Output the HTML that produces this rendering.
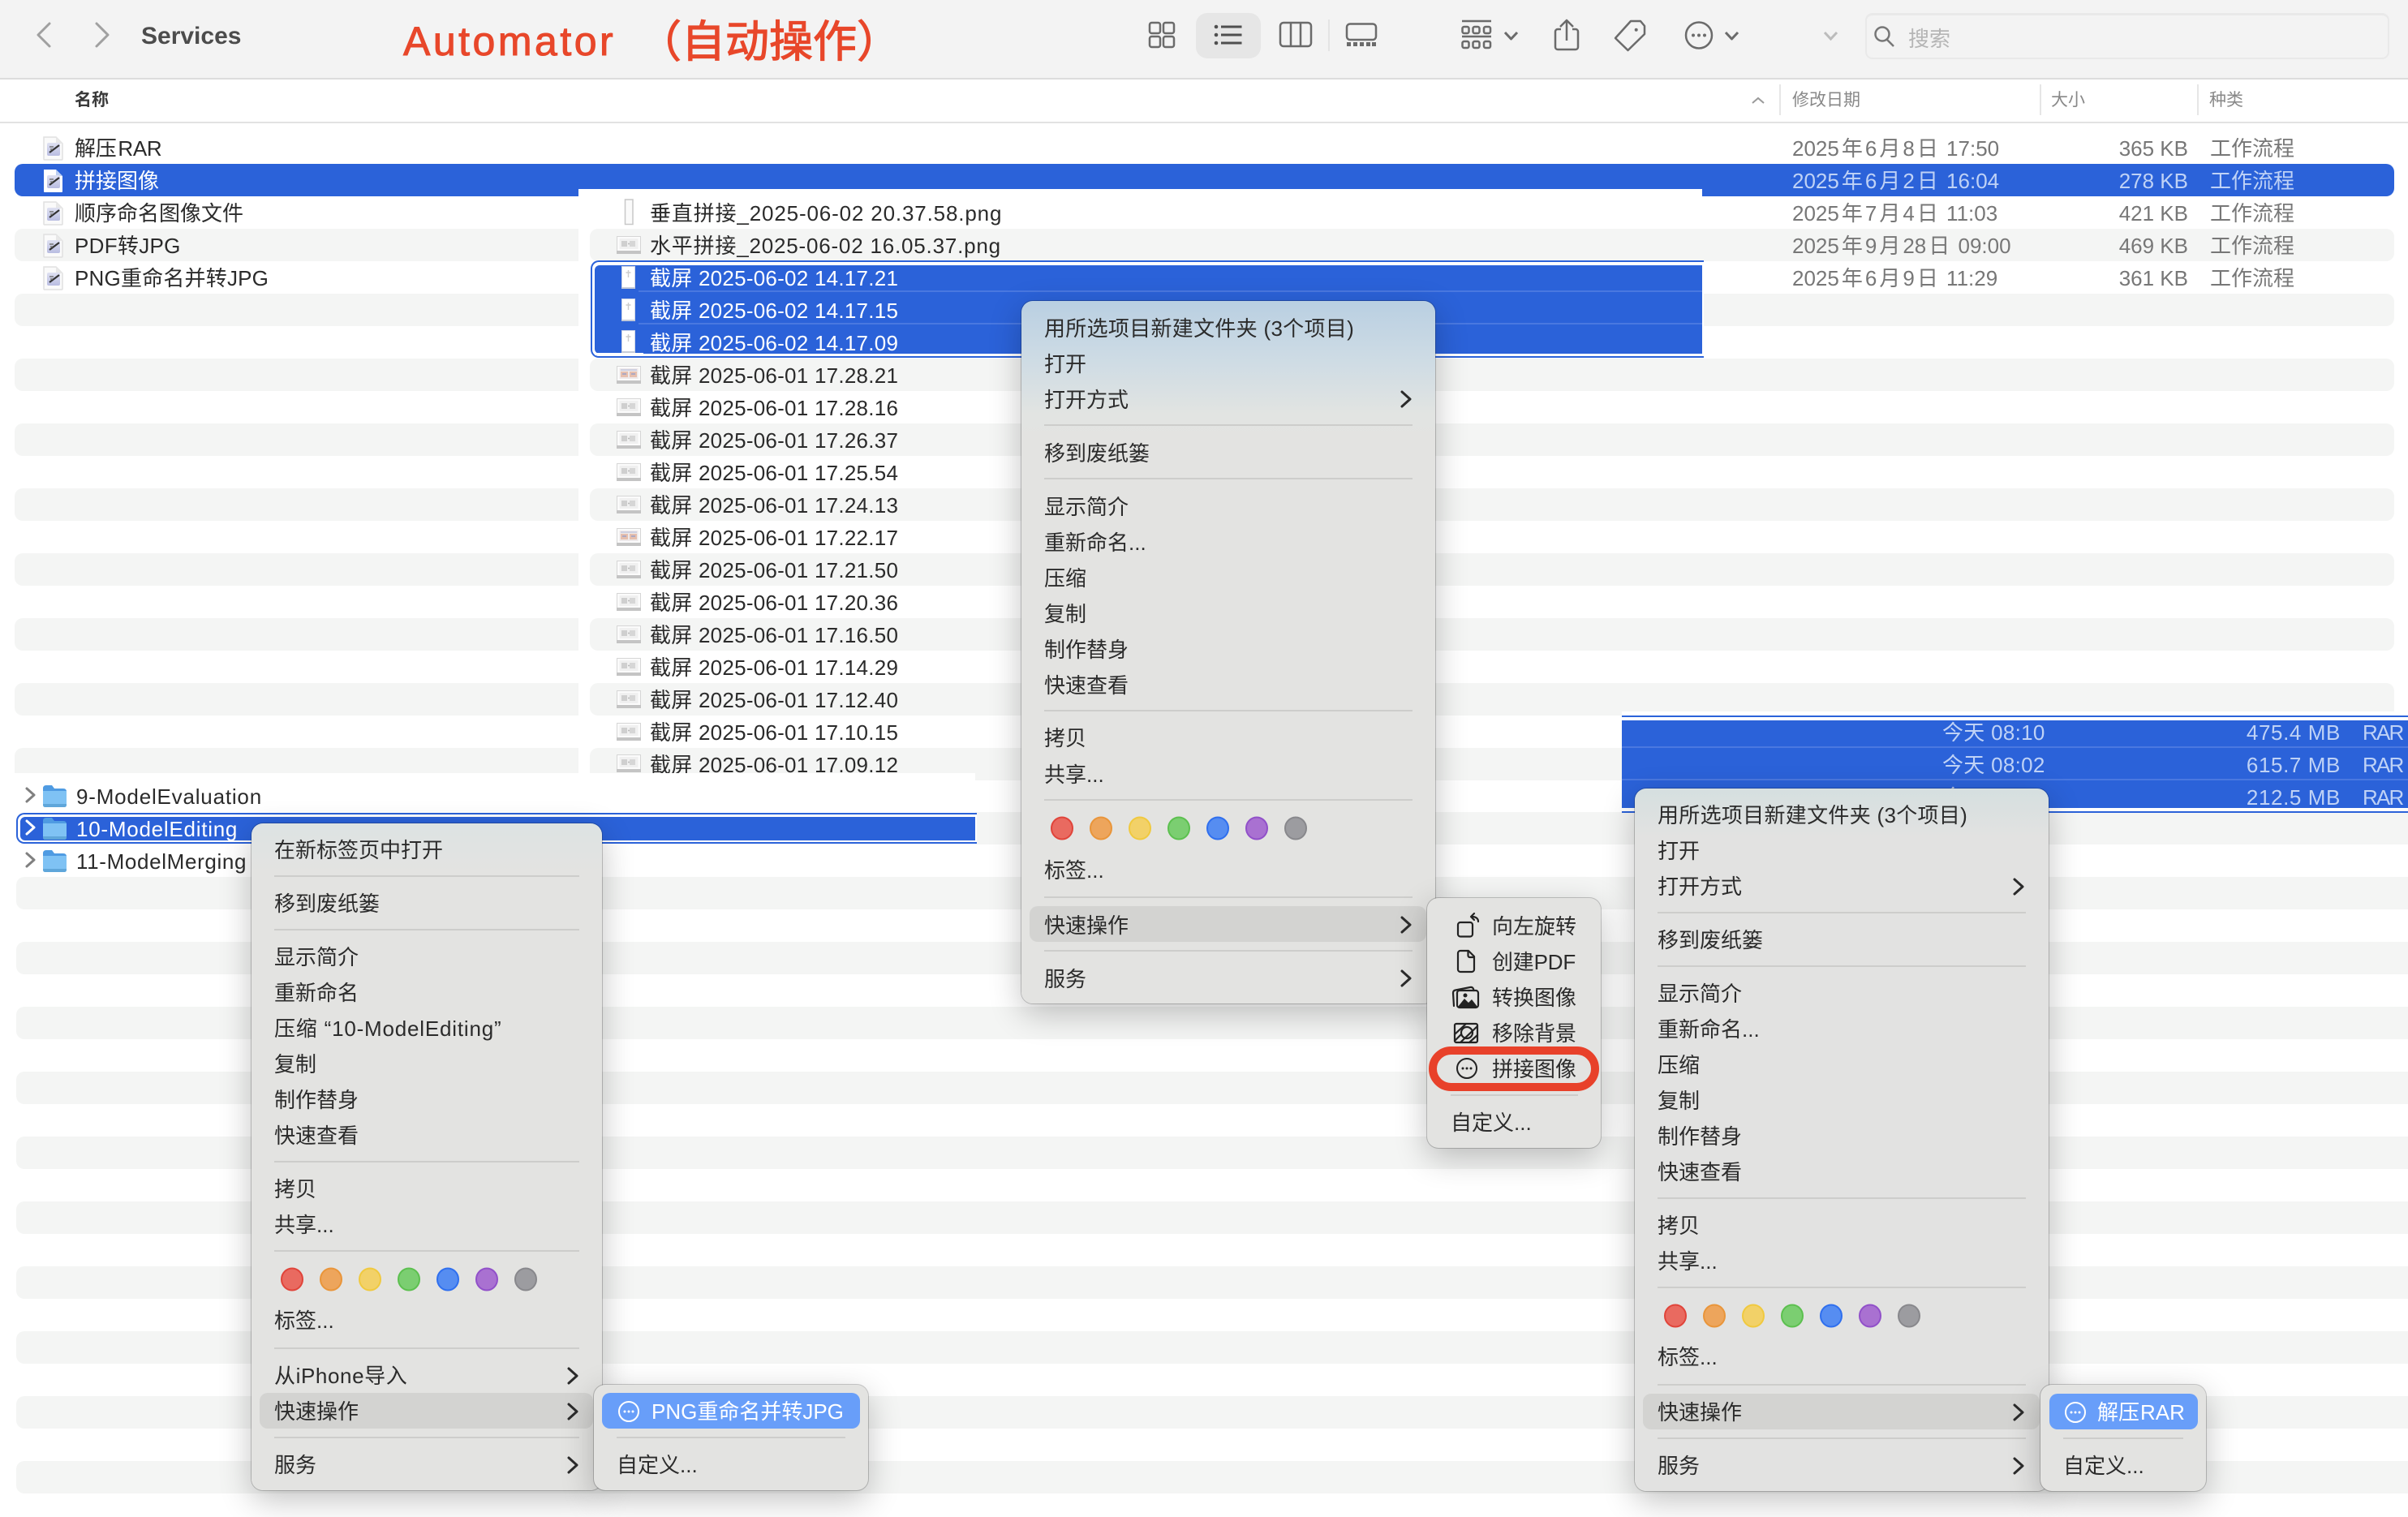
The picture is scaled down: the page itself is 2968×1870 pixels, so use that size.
<!DOCTYPE html>
<html lang="zh-CN"><head><meta charset="utf-8"><title>Automator</title>
<style>
html,body{margin:0;padding:0;background:#fff}
body{position:relative;width:2968px;height:1870px;overflow:hidden;font-family:"Liberation Sans","Noto Sans CJK SC",sans-serif;color:#2b2b2b}
div{position:absolute}
.t{position:absolute;white-space:nowrap;font-size:26px;line-height:40px;height:40px;margin-top:1px}
.t i{font-style:normal;margin:0 3px}
.w{color:#fff}
.g{color:#777}
.l{color:#bfd2f6}
.d{left:2209px}
.z{right:271px;text-align:right}
.k{left:2724px}
.hd{font-size:21px;color:#888}
.st{background:#f4f5f4;height:40px}
.m{border-radius:14px;background:#e3e3e1;box-shadow:0 0 0 1px rgba(0,0,0,.2),0 12px 40px rgba(0,0,0,.24)}
.s{height:2px;background:#cdcdcb}
.h{background:#d3d3d1;border-radius:10px;height:44px}
.b{background:#689ef9;border-radius:10px;height:44px}
.sl{background:#4a78e0;height:2px}
.f{left:801px;letter-spacing:.25px}
.r{letter-spacing:-1.8px}
</style></head><body>

<!-- toolbar -->
<div style="left:0;top:0;width:2968px;height:96px;background:#f3f3f3;border-bottom:2px solid #dcdcdc"></div>
<div style="left:1474px;top:16px;width:80px;height:56px;border-radius:14px;background:#e6e6e6"></div>
<div style="left:1637px;top:24px;width:2px;height:39px;background:#e4e4e4"></div>
<div style="left:2299px;top:16px;width:642px;height:52px;border:2px solid #e9e9e9;border-top-width:3px;border-radius:9px"></div>
<span class="t" style="left:174px;top:24px;font-size:30px;font-weight:bold;color:#4c4c4c">Services</span>
<span class="t" style="left:497px;top:20px;font-size:50px;line-height:60px;height:60px;letter-spacing:3.5px;color:#e8472a;-webkit-text-stroke:1px #e8472a">Automator</span>
<span class="t" style="left:786px;top:21px;font-size:54px;line-height:60px;height:60px;color:#e8472a;-webkit-text-stroke:1.2px #e8472a">（自动操作）</span>
<span class="t" style="left:2352px;top:27px;color:#b5b5b5">搜索</span>

<!-- column header -->
<div style="left:0;top:150px;width:2968px;height:2px;background:#e2e2e2"></div>
<div style="left:2193px;top:104px;width:2px;height:38px;background:#e6e6e6"></div>
<div style="left:2514px;top:104px;width:2px;height:38px;background:#e6e6e6"></div>
<div style="left:2708px;top:104px;width:2px;height:38px;background:#e6e6e6"></div>
<span class="t" style="left:92px;top:103px;font-size:21px;font-weight:bold;color:#3a3a3a">名称</span>
<span class="t hd" style="left:2209px;top:103px">修改日期</span>
<span class="t hd" style="left:2528px;top:103px">大小</span>
<span class="t hd" style="left:2723px;top:103px">种类</span>

<!-- base stripes, left part -->
<div class="st" style="left:18px;top:282px;width:695px;border-radius:10px 0 0 10px"></div>
<div class="st" style="left:18px;top:362px;width:695px;border-radius:10px 0 0 10px"></div>
<div class="st" style="left:18px;top:442px;width:695px;border-radius:10px 0 0 10px"></div>
<div class="st" style="left:18px;top:522px;width:695px;border-radius:10px 0 0 10px"></div>
<div class="st" style="left:18px;top:602px;width:695px;border-radius:10px 0 0 10px"></div>
<div class="st" style="left:18px;top:682px;width:695px;border-radius:10px 0 0 10px"></div>
<div class="st" style="left:18px;top:762px;width:695px;border-radius:10px 0 0 10px"></div>
<div class="st" style="left:18px;top:842px;width:695px;border-radius:10px 0 0 10px"></div>
<div class="st" style="left:18px;top:922px;width:695px;border-radius:10px 0 0 10px"></div>
<!-- middle -->
<div class="st" style="left:727px;top:282px;width:1371px;border-radius:10px 0 0 10px"></div>
<div class="st" style="left:727px;top:442px;width:1371px;border-radius:10px 0 0 10px"></div>
<div class="st" style="left:727px;top:522px;width:1371px;border-radius:10px 0 0 10px"></div>
<div class="st" style="left:727px;top:602px;width:1371px;border-radius:10px 0 0 10px"></div>
<div class="st" style="left:727px;top:682px;width:1371px;border-radius:10px 0 0 10px"></div>
<div class="st" style="left:727px;top:762px;width:1371px;border-radius:10px 0 0 10px"></div>
<div class="st" style="left:727px;top:842px;width:1371px;border-radius:10px 0 0 10px"></div>
<div class="st" style="left:727px;top:922px;width:1272px;border-radius:10px 0 0 10px"></div>
<!-- right -->
<div class="st" style="left:2098px;top:282px;width:853px;border-radius:0 10px 10px 0"></div>
<div class="st" style="left:2098px;top:362px;width:853px;border-radius:0 10px 10px 0"></div>
<div class="st" style="left:2098px;top:442px;width:853px;border-radius:0 10px 10px 0"></div>
<div class="st" style="left:2098px;top:522px;width:853px;border-radius:0 10px 10px 0"></div>
<div class="st" style="left:2098px;top:602px;width:853px;border-radius:0 10px 10px 0"></div>
<div class="st" style="left:2098px;top:682px;width:853px;border-radius:0 10px 10px 0"></div>
<div class="st" style="left:2098px;top:762px;width:853px;border-radius:0 10px 10px 0"></div>
<div class="st" style="left:2098px;top:842px;width:853px;height:35px;border-radius:0 10px 0 0"></div>
<!-- lower full rows -->
<div class="st" style="left:20px;top:1001px;width:2948px"></div>
<div class="st" style="left:20px;top:1081px;width:2948px;border-radius:10px 0 0 10px"></div>
<div class="st" style="left:20px;top:1161px;width:2948px;border-radius:10px 0 0 10px"></div>
<div class="st" style="left:20px;top:1241px;width:2948px;border-radius:10px 0 0 10px"></div>
<div class="st" style="left:20px;top:1321px;width:2948px;border-radius:10px 0 0 10px"></div>
<div class="st" style="left:20px;top:1401px;width:2948px;border-radius:10px 0 0 10px"></div>
<div class="st" style="left:20px;top:1481px;width:2948px;border-radius:10px 0 0 10px"></div>
<div class="st" style="left:20px;top:1561px;width:2948px;border-radius:10px 0 0 10px"></div>
<div class="st" style="left:20px;top:1641px;width:2948px;border-radius:10px 0 0 10px"></div>
<div class="st" style="left:20px;top:1721px;width:2948px;border-radius:10px 0 0 10px"></div>
<div class="st" style="left:20px;top:1801px;width:2948px;border-radius:10px 0 0 10px"></div>

<!-- selected row -->
<div style="left:18px;top:202px;width:2933px;height:40px;background:#2b62d9;border-radius:10px"></div>
<!-- middle patch cover -->
<div style="left:713px;top:233px;width:1385px;height:9px;background:#fff"></div>
<div style="left:713px;top:242px;width:14px;height:711px;background:#fff"></div>

<!-- top rows -->
<span class="t" style="left:92px;top:162px;letter-spacing:-.3px">解压<span style="margin-left:2px">RAR</span></span>
<span class="t w" style="left:92px;top:202px">拼接图像</span>
<span class="t" style="left:92px;top:242px">顺序命名图像文件</span>
<span class="t" style="left:92px;top:282px;letter-spacing:.3px">PDF转JPG</span>
<span class="t" style="left:92px;top:322px;letter-spacing:.2px">PNG重命名并转JPG</span>

<span class="t g d" style="top:162px">2025<i>年</i>6<i>月</i>8<i>日</i> 17:50</span><span class="t g z" style="top:162px">365 KB</span><span class="t g k" style="top:162px">工作流程</span>
<span class="t l d" style="top:202px">2025<i>年</i>6<i>月</i>2<i>日</i> 16:04</span><span class="t l z" style="top:202px">278 KB</span><span class="t l k" style="top:202px">工作流程</span>
<span class="t g d" style="top:242px">2025<i>年</i>7<i>月</i>4<i>日</i> 11:03</span><span class="t g z" style="top:242px">421 KB</span><span class="t g k" style="top:242px">工作流程</span>
<span class="t g d" style="top:282px">2025<i>年</i>9<i>月</i>28<i>日</i> 09:00</span><span class="t g z" style="top:282px">469 KB</span><span class="t g k" style="top:282px">工作流程</span>
<span class="t g d" style="top:322px">2025<i>年</i>6<i>月</i>9<i>日</i> 11:29</span><span class="t g z" style="top:322px">361 KB</span><span class="t g k" style="top:322px">工作流程</span>

<!-- middle selection -->
<div style="left:728px;top:321px;width:1370px;height:116px;border:2px solid #2b62d9;border-right:0;border-radius:10px 0 0 10px;background:#fff"></div>
<div style="left:733px;top:327px;width:1365px;height:109px;background:#2b62d9;border-radius:6px 0 0 6px"></div>
<div class="sl" style="left:787px;top:358px;width:1311px"></div>
<div class="sl" style="left:787px;top:398px;width:1311px"></div>

<span class="t f" style="top:242px;letter-spacing:.85px">垂直拼接_2025-06-02 20.37.58.png</span>
<span class="t f" style="top:282px;letter-spacing:.8px">水平拼接_2025-06-02 16.05.37.png</span>
<span class="t f w" style="top:322px">截屏 2025-06-02 14.17.21</span>
<span class="t f w" style="top:362px">截屏 2025-06-02 14.17.15</span>
<span class="t f w" style="top:402px">截屏 2025-06-02 14.17.09</span>
<span class="t f" style="top:442px">截屏 2025-06-01 17.28.21</span>
<span class="t f" style="top:482px">截屏 2025-06-01 17.28.16</span>
<span class="t f" style="top:522px">截屏 2025-06-01 17.26.37</span>
<span class="t f" style="top:562px">截屏 2025-06-01 17.25.54</span>
<span class="t f" style="top:602px">截屏 2025-06-01 17.24.13</span>
<span class="t f" style="top:642px">截屏 2025-06-01 17.22.17</span>
<span class="t f" style="top:682px">截屏 2025-06-01 17.21.50</span>
<span class="t f" style="top:722px">截屏 2025-06-01 17.20.36</span>
<span class="t f" style="top:762px">截屏 2025-06-01 17.16.50</span>
<span class="t f" style="top:802px">截屏 2025-06-01 17.14.29</span>
<span class="t f" style="top:842px">截屏 2025-06-01 17.12.40</span>
<span class="t f" style="top:882px">截屏 2025-06-01 17.10.15</span>
<span class="t f" style="top:922px">截屏 2025-06-01 17.09.12</span>

<!-- right patch -->
<div style="left:1999px;top:877px;width:969px;height:125px;background:#fff"></div>
<div style="left:1999px;top:882px;width:969px;height:2px;background:#2b62d9"></div>
<div style="left:1999px;top:888px;width:969px;height:108px;background:#2b62d9"></div>
<div style="left:1999px;top:1000px;width:969px;height:2px;background:#2b62d9"></div>
<div class="sl" style="left:1999px;top:920px;width:969px"></div>
<div class="sl" style="left:1999px;top:960px;width:969px"></div>
<span class="t l" style="left:2394px;top:882px;letter-spacing:.3px">今天 08:10</span>
<span class="t l" style="left:2394px;top:922px;letter-spacing:.3px">今天 08:02</span>
<span class="t l" style="left:2394px;top:962px">今天</span>
<span class="t l" style="right:83px;top:882px;letter-spacing:.6px">475.4 MB</span>
<span class="t l" style="right:83px;top:922px;letter-spacing:.6px">615.7 MB</span>
<span class="t l" style="right:83px;top:962px;letter-spacing:.6px">212.5 MB</span>
<span class="t l r" style="left:2912px;top:882px">RAR</span>
<span class="t l r" style="left:2912px;top:922px">RAR</span>
<span class="t l r" style="left:2912px;top:962px">RAR</span>

<!-- third patch -->
<div style="left:0;top:953px;width:1202px;height:89px;background:#fff"></div>
<div style="left:20px;top:1002px;width:1182px;height:34px;border:2px solid #2b62d9;border-right:0;border-radius:10px 0 0 10px;background:#fff"></div>
<div style="left:25px;top:1007px;width:1177px;height:29px;background:#2b62d9;border-radius:6px 0 0 6px"></div>
<span class="t" style="left:94px;top:961px;letter-spacing:.8px">9-ModelEvaluation</span>
<span class="t w" style="left:94px;top:1001px;letter-spacing:.75px">10-ModelEditing</span>
<span class="t" style="left:94px;top:1041px;letter-spacing:.65px">11-ModelMerging</span>

<!-- middle menu -->
<div class="m" style="left:1259px;top:371px;width:510px;height:866px;background:linear-gradient(180deg,#b9cfe2 0,#cddbe4 70px,#e2e4e2 140px,#e3e3e1 170px)"></div>
<span class="t" style="left:1287px;top:384px;letter-spacing:.3px">用所选项目新建文件夹 (3个项目)</span>
<span class="t" style="left:1287px;top:428px">打开</span>
<span class="t" style="left:1287px;top:472px">打开方式</span>
<div class="s" style="left:1287px;top:523px;width:454px"></div>
<span class="t" style="left:1287px;top:538px">移到废纸篓</span>
<div class="s" style="left:1287px;top:589px;width:454px"></div>
<span class="t" style="left:1287px;top:604px">显示简介</span>
<span class="t" style="left:1287px;top:648px">重新命名...</span>
<span class="t" style="left:1287px;top:692px">压缩</span>
<span class="t" style="left:1287px;top:736px">复制</span>
<span class="t" style="left:1287px;top:780px">制作替身</span>
<span class="t" style="left:1287px;top:824px">快速查看</span>
<div class="s" style="left:1287px;top:875px;width:454px"></div>
<span class="t" style="left:1287px;top:889px">拷贝</span>
<span class="t" style="left:1287px;top:934px">共享...</span>
<div class="s" style="left:1287px;top:985px;width:454px"></div>
<span class="t" style="left:1287px;top:1052px">标签...</span>
<div class="s" style="left:1287px;top:1105px;width:454px"></div>
<div class="h" style="left:1269px;top:1117px;width:489px"></div>
<span class="t" style="left:1287px;top:1120px">快速操作</span>
<div class="s" style="left:1287px;top:1171px;width:454px"></div>
<span class="t" style="left:1287px;top:1186px">服务</span>

<!-- middle submenu -->
<div class="m" style="left:1759px;top:1107px;width:214px;height:308px"></div>
<span class="t" style="left:1839px;top:1121px">向左旋转</span>
<span class="t" style="left:1839px;top:1165px;letter-spacing:-.2px">创建PDF</span>
<span class="t" style="left:1839px;top:1209px">转换图像</span>
<span class="t" style="left:1839px;top:1253px">移除背景</span>
<div style="left:1761px;top:1290px;width:190px;height:35px;border:10px solid #e8412a;border-radius:28px"></div>
<span class="t" style="left:1839px;top:1297px">拼接图像</span>
<div class="s" style="left:1788px;top:1349px;width:157px"></div>
<span class="t" style="left:1788px;top:1363px">自定义...</span>

<!-- left menu -->
<div class="m" style="left:310px;top:1015px;width:432px;height:822px;background:linear-gradient(180deg,#dde3e3 0,#e3e3e1 60px)"></div>
<span class="t" style="left:338px;top:1027px">在新标签页中打开</span>
<div class="s" style="left:338px;top:1079px;width:376px"></div>
<span class="t" style="left:338px;top:1093px">移到废纸篓</span>
<div class="s" style="left:338px;top:1145px;width:376px"></div>
<span class="t" style="left:338px;top:1159px">显示简介</span>
<span class="t" style="left:338px;top:1203px">重新命名</span>
<span class="t" style="left:338px;top:1247px;letter-spacing:.8px">压缩 “10-ModelEditing”</span>
<span class="t" style="left:338px;top:1291px">复制</span>
<span class="t" style="left:338px;top:1335px">制作替身</span>
<span class="t" style="left:338px;top:1379px">快速查看</span>
<div class="s" style="left:338px;top:1431px;width:376px"></div>
<span class="t" style="left:338px;top:1445px">拷贝</span>
<span class="t" style="left:338px;top:1489px">共享...</span>
<div class="s" style="left:338px;top:1541px;width:376px"></div>
<span class="t" style="left:338px;top:1607px">标签...</span>
<div class="s" style="left:338px;top:1661px;width:376px"></div>
<span class="t" style="left:338px;top:1675px;letter-spacing:.6px">从iPhone导入</span>
<div class="h" style="left:320px;top:1717px;width:411px"></div>
<span class="t" style="left:338px;top:1719px">快速操作</span>
<div class="s" style="left:338px;top:1771px;width:376px"></div>
<span class="t" style="left:338px;top:1785px">服务</span>

<!-- left submenu -->
<div class="m" style="left:732px;top:1707px;width:338px;height:130px"></div>
<div class="b" style="left:742px;top:1717px;width:318px"></div>
<span class="t w" style="left:803px;top:1719px">PNG重命名并转JPG</span>
<div class="s" style="left:760px;top:1771px;width:282px"></div>
<span class="t" style="left:760px;top:1785px">自定义...</span>

<!-- right menu -->
<div class="m" style="left:2015px;top:972px;width:510px;height:866px;background:linear-gradient(180deg,#d5dfe0 0,#e2e2e1 60px)"></div>
<span class="t" style="left:2043px;top:984px;letter-spacing:.3px">用所选项目新建文件夹 (3个项目)</span>
<span class="t" style="left:2043px;top:1028px">打开</span>
<span class="t" style="left:2043px;top:1072px">打开方式</span>
<div class="s" style="left:2043px;top:1124px;width:454px"></div>
<span class="t" style="left:2043px;top:1138px">移到废纸篓</span>
<div class="s" style="left:2043px;top:1190px;width:454px"></div>
<span class="t" style="left:2043px;top:1204px">显示简介</span>
<span class="t" style="left:2043px;top:1248px">重新命名...</span>
<span class="t" style="left:2043px;top:1292px">压缩</span>
<span class="t" style="left:2043px;top:1336px">复制</span>
<span class="t" style="left:2043px;top:1380px">制作替身</span>
<span class="t" style="left:2043px;top:1424px">快速查看</span>
<div class="s" style="left:2043px;top:1476px;width:454px"></div>
<span class="t" style="left:2043px;top:1490px">拷贝</span>
<span class="t" style="left:2043px;top:1534px">共享...</span>
<div class="s" style="left:2043px;top:1586px;width:454px"></div>
<span class="t" style="left:2043px;top:1652px">标签...</span>
<div class="s" style="left:2043px;top:1706px;width:454px"></div>
<div class="h" style="left:2025px;top:1718px;width:489px"></div>
<span class="t" style="left:2043px;top:1720px">快速操作</span>
<div class="s" style="left:2043px;top:1772px;width:454px"></div>
<span class="t" style="left:2043px;top:1786px">服务</span>

<!-- right submenu -->
<div class="m" style="left:2515px;top:1707px;width:204px;height:131px"></div>
<div class="b" style="left:2526px;top:1718px;width:183px"></div>
<span class="t w" style="left:2585px;top:1720px">解压<span style="margin-left:1px">RAR</span></span>
<div class="s" style="left:2543px;top:1772px;width:148px"></div>
<span class="t" style="left:2543px;top:1786px">自定义...</span>

<!-- icon overlay -->
<svg style="position:absolute;left:0;top:0" width="2968" height="1870" viewBox="0 0 2968 1870">
<defs>
<linearGradient id="boxg" x1="0" y1="0" x2="0" y2="1"><stop offset="0" stop-color="#dfe1f2"/><stop offset="1" stop-color="#b9bde2"/></linearGradient>
<g id="doc"><path d="M1 1h15l8 8v19a1 1 0 0 1-1 1H2a1 1 0 0 1-1-1z" fill="#fafafa" stroke="#e0e0e0" stroke-width="1.500"/><path d="M16 1v8h8z" fill="#e8e8e8"/><rect x="5" y="8" width="16" height="16" rx="2" fill="url(#boxg)"/><path d="M8 20l12-9" stroke="#333" stroke-width="2.200"/><path d="M8 13h5M9 16h3" stroke="#777" stroke-width="1.400"/></g>
<g id="doc2"><path d="M1 1h15l8 8v19a1 1 0 0 1-1 1H2a1 1 0 0 1-1-1z" fill="#fff"/><path d="M16 1v8h8z" fill="#bccff3"/><rect x="5" y="8" width="16" height="16" rx="2" fill="url(#boxg)"/><path d="M8 20l12-9" stroke="#333" stroke-width="2.200"/><path d="M8 13h5M9 16h3" stroke="#777" stroke-width="1.400"/></g>
<g id="fld"><path d="M0 4q0-4 4-4h7l3 4h11q4 0 4 4v4H0z" fill="#4f9be2"/><path d="M0 7h29v17q0 3-3 3H3q-3 0-3-3z" fill="#7fc2f4"/><path d="M0 23h29v1q0 3-3 3H3q-3 0-3-3z" fill="#5fa6da"/></g>
<g id="land"><rect x="0.500" y="0.500" width="29" height="20" fill="#fbfbfb" stroke="#d6d6d6"/><rect x="0" y="18" width="30" height="4" fill="#c4c4c4"/><rect x="3.500" y="3" width="23" height="13" fill="#f0f0f0"/><rect x="6" y="6" width="7" height="7" fill="#cfcfcf"/><rect x="16" y="6" width="7" height="7" fill="#d6d6d6"/><path d="M14 9.500h2" stroke="#bbb" stroke-width="1.500"/></g>
<g id="landc"><rect x="0.500" y="0.500" width="29" height="20" fill="#fbfbfb" stroke="#d6d6d6"/><rect x="0" y="18" width="30" height="4" fill="#c4c4c4"/><rect x="3.500" y="3" width="23" height="13" fill="#eee9ea"/><rect x="5" y="7" width="9" height="7" fill="#e6bfae"/><rect x="16" y="7" width="9" height="7" fill="#e6bfae"/><path d="M5 5h20" stroke="#c3c7dd" stroke-width="1.500"/><path d="M7 10h5M18 10h5" stroke="#9aa0c8" stroke-width="1.500"/></g>
<g id="port"><rect x="0.500" y="0.500" width="16" height="27" fill="#fff" stroke="#cfd6e6"/><rect x="0" y="26" width="17" height="2" fill="#c5cbd8"/><path d="M8.500 5v9M5.500 8h6" stroke="#ccc" stroke-width="1.400"/></g>
<g id="mc"><polyline points="0,-9 10,0 0,9" fill="none" stroke="#2a2a2a" stroke-width="3" stroke-linecap="round" stroke-linejoin="round"/></g>
<g id="dots">
<ellipse cx="0" cy="0" rx="13" ry="13.500" fill="#e96a60" stroke="#e0443a" stroke-width="2"/>
<ellipse cx="48" cy="0" rx="13" ry="13.500" fill="#eda55c" stroke="#e9953a" stroke-width="2"/>
<ellipse cx="96" cy="0" rx="13" ry="13.500" fill="#f2d168" stroke="#f0c93f" stroke-width="2"/>
<ellipse cx="144" cy="0" rx="13" ry="13.500" fill="#7bce71" stroke="#5cc04f" stroke-width="2"/>
<ellipse cx="192" cy="0" rx="13" ry="13.500" fill="#568df1" stroke="#2f6fee" stroke-width="2"/>
<ellipse cx="240" cy="0" rx="13" ry="13.500" fill="#a971d1" stroke="#9150c9" stroke-width="2"/>
<ellipse cx="288" cy="0" rx="13" ry="13.500" fill="#9c9ca0" stroke="#88888c" stroke-width="2"/>
</g>
<g id="ell"><circle cx="0" cy="0" r="12" fill="none" stroke="currentColor" stroke-width="2"/><circle cx="-5" cy="0" r="1.500" fill="currentColor"/><circle cx="0" cy="0" r="1.500" fill="currentColor"/><circle cx="5" cy="0" r="1.500" fill="currentColor"/></g>
</defs>

<!-- nav -->
<g fill="none" stroke="#a0a0a0" stroke-width="3" stroke-linecap="round" stroke-linejoin="round">
<polyline points="61,29 47,43 61,57"/><polyline points="119,29 133,43 119,57"/></g>

<!-- toolbar icons -->
<g fill="none" stroke="#6b6b6b" stroke-width="2.500" stroke-linejoin="round">
<rect x="1417" y="28" width="13" height="13" rx="2.500"/><rect x="1434" y="28" width="13" height="13" rx="2.500"/>
<rect x="1417" y="45" width="13" height="13" rx="2.500"/><rect x="1434" y="45" width="13" height="13" rx="2.500"/>
<rect x="1578" y="28" width="38" height="29" rx="4"/><path d="M1591 28v29M1603 28v29"/>
<rect x="1660" y="29.500" width="36" height="19.500" rx="4"/>
<path d="M1802 26h36M1802 45h36" stroke-width="2.600"/>
<rect x="1802.500" y="33" width="8" height="8" rx="2"/><rect x="1815.500" y="33" width="8" height="8" rx="2"/><rect x="1829" y="33" width="8" height="8" rx="2"/>
<rect x="1802.500" y="51" width="8" height="8" rx="2"/><rect x="1815.500" y="51" width="8" height="8" rx="2"/><rect x="1829" y="51" width="8" height="8" rx="2"/>
<polyline points="1855,40 1862.500,48 1870,40" stroke-width="3"/>
<path d="M1924 36h-4a3 3 0 0 0-3 3v19a3 3 0 0 0 3 3h22a3 3 0 0 0 3-3V39a3 3 0 0 0-3-3h-4"/>
<path d="M1931 50V25M1923 33l8-8 8 8"/>
<path d="M2010 26h12l5 6v10l-20.500 20-15.500-15z"/>
<circle cx="2094" cy="43.500" r="16"/>
<polyline points="2127,40 2134.500,48 2142,40" stroke-width="3"/>
<circle cx="2320" cy="42" r="8.500" stroke="#777"/><path d="M2326 49l8 8" stroke="#777"/>
</g>
<polyline points="2249,40 2256.500,48 2264,40" fill="none" stroke="#bcbcbc" stroke-width="3"/>
<polyline points="2160,127 2167,121 2174,127" fill="none" stroke="#9a9a9a" stroke-width="2"/>
<g fill="#6b6b6b"><circle cx="2016.700" cy="36.700" r="2"/><circle cx="2087" cy="43.500" r="2"/><circle cx="2094" cy="43.500" r="2"/><circle cx="2101" cy="43.500" r="2"/>
<rect x="1660" y="52" width="5" height="5"/><rect x="1668" y="52" width="5" height="5"/><rect x="1676" y="52" width="5" height="5"/><rect x="1684" y="52" width="5" height="5"/><rect x="1691" y="52" width="5" height="5"/></g>
<g fill="#4f4f4f"><circle cx="1499" cy="33" r="2.300"/><circle cx="1499" cy="43" r="2.300"/><circle cx="1499" cy="53" r="2.300"/></g>
<path d="M1505 33h25.500M1505 43h25.500M1505 53h25.500" stroke="#4f4f4f" stroke-width="3"/>

<!-- file icons -->
<use href="#doc" x="53" y="168"/><use href="#doc2" x="53" y="208"/><use href="#doc" x="53" y="248"/><use href="#doc" x="53" y="288"/><use href="#doc" x="53" y="328"/>
<rect x="770.500" y="246" width="9.500" height="30.500" fill="#fafafa" stroke="#c8c8c8" stroke-width="1.500"/>
<use href="#land" x="760" y="291"/>
<use href="#port" x="766" y="328"/><use href="#port" x="766" y="368"/><use href="#port" x="766" y="407"/>
<rect x="733" y="435" width="60" height="3" fill="#fff"/>
<use href="#landc" x="760" y="451"/><use href="#land" x="760" y="491"/><use href="#land" x="760" y="531"/><use href="#land" x="760" y="571"/><use href="#land" x="760" y="611"/><use href="#landc" x="760" y="651"/><use href="#land" x="760" y="691"/><use href="#land" x="760" y="731"/><use href="#land" x="760" y="771"/><use href="#land" x="760" y="811"/><use href="#land" x="760" y="851"/><use href="#land" x="760" y="891"/><use href="#land" x="760" y="930"/>

<!-- folders -->
<use href="#fld" x="53" y="968"/><use href="#fld" x="53" y="1008"/><use href="#fld" x="53" y="1048"/>
<g fill="none" stroke-width="3" stroke-linecap="round" stroke-linejoin="round">
<polyline points="33,972 42,980 33,988" stroke="#808080"/>
<polyline points="33,1012 42,1020 33,1028" stroke="#fff"/>
<polyline points="33,1052 42,1060 33,1068" stroke="#808080"/>
</g>

<!-- menu chevrons -->
<use href="#mc" x="1728" y="492"/><use href="#mc" x="1728" y="1140"/><use href="#mc" x="1728" y="1206"/>
<use href="#mc" x="701" y="1696"/><use href="#mc" x="701" y="1740"/><use href="#mc" x="701" y="1806"/>
<use href="#mc" x="2483" y="1093"/><use href="#mc" x="2483" y="1741"/><use href="#mc" x="2483" y="1807"/>

<!-- tag dots -->
<use href="#dots" x="1309" y="1021"/><use href="#dots" x="360" y="1577"/><use href="#dots" x="2065" y="1622"/>

<!-- submenu icons -->
<g fill="none" stroke="#222" stroke-width="2.200" stroke-linejoin="round" stroke-linecap="round">
<rect x="1797" y="1137" width="18" height="17.500" rx="3"/>
<path d="M1822 1136c0-4-3-6-8-6M1817 1126l-4 4 4 4"/>
<path d="M1800 1172h10l7 7v16a3 3 0 0 1-3 3h-14a3 3 0 0 1-3-3v-20a3 3 0 0 1 3-3z"/><path d="M1809.500 1172v6a2 2 0 0 0 2 2h5.500"/>
<path d="M1792 1240l-1-16q0-3 3-3.500l18-3.500q3-.5 4 2l.500 2"/>
<rect x="1796" y="1221" width="26" height="21" rx="3"/>
<rect x="1793" y="1262" width="28" height="23" rx="2"/>
<path d="M1793 1275l14-13M1800 1285l21-20M1793 1283l8-8M1811 1285l10-9"/>
<circle cx="1808" cy="1273" r="7"/>
</g>
<path d="M1797 1241l8-10 5 5 4-4 7 9z" fill="#222"/><circle cx="1806" cy="1227" r="2.500" fill="#222"/>
<use href="#ell" x="1808" y="1317" color="#222"/>
<use href="#ell" x="775" y="1740" color="#fff"/>
<use href="#ell" x="2558" y="1741" color="#fff"/>
</svg>
</body></html>
